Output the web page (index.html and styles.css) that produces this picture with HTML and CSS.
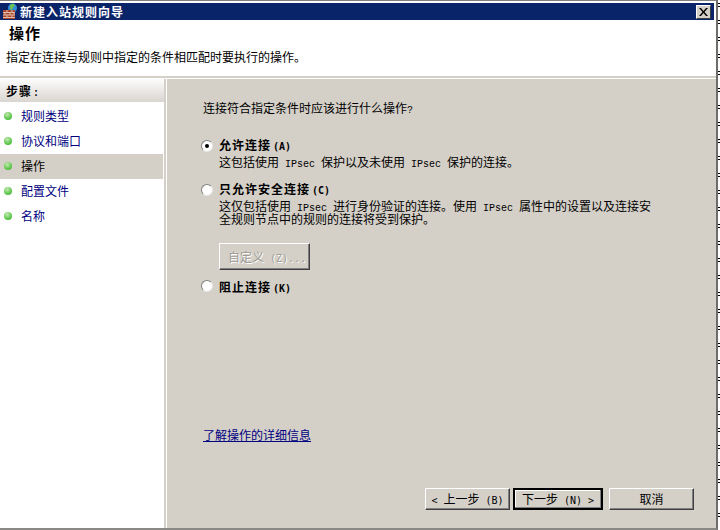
FILE: index.html
```html
<!DOCTYPE html>
<html lang="zh">
<head>
<meta charset="utf-8">
<title>新建入站规则向导</title>
<link rel="stylesheet" href="styles.css">
</head>
<body>
<div class="window">
  <div class="titlebar">
    <svg class="app-icon" width="16" height="16" viewBox="0 0 16 16"><circle cx="9.500" cy="5" r="4.500" fill="#2f8fd8"/><path d="M7 2l3-1.500 2 2-2 2-1 2.500-2-1z" fill="#6cc24f"/><rect x="0" y="7" width="12" height="9" fill="#a5482f"/><path d="M0 9.500h12M0 12h12M0 14.500h12M4 7v2.500M9 7v2.500M2 9.500V12M7 9.500V12M11 9.500V12M4 12v2.500M9 12v2.500" stroke="#e2b9a4" stroke-width="1"/></svg>
    <span class="title-text">新建入站规则向导</span>
    <span class="close-btn"><svg width="9" height="8" viewBox="0 0 9 8"><path d="M0 0h2l2.500 3L7 0h2L5.500 4 9 8H7L4.500 5 2 8H0l3.500-4z" fill="#000"/></svg></span>
  </div>
  <header class="header">
    <h1 class="heading">操作</h1>
    <p class="subheading">指定在连接与规则中指定的条件相匹配时要执行的操作。</p>
  </header>
  <div class="body">
    <nav class="sidebar">
      <div class="steps-title">步骤<span class="lat">:</span></div>
      <ul class="steps">
        <li class="step"><i class="dot"></i><span class="step-link">规则类型</span></li>
        <li class="step"><i class="dot"></i><span class="step-link">协议和端口</span></li>
        <li class="step step-active"><i class="dot"></i><span>操作</span></li>
        <li class="step"><i class="dot"></i><span class="step-link">配置文件</span></li>
        <li class="step"><i class="dot"></i><span class="step-link">名称</span></li>
      </ul>
    </nav>
    <main class="content">
      <p class="question">连接符合指定条件时应该进行什么操作<span class="lat">?</span></p>
      <div class="option option-first">
        <i class="radio radio-on"></i>
        <div class="option-text">
          <div class="option-label">允许连接<span class="lat key">(A)</span></div>
          <div class="option-desc">这包括使用<span class="lat"> IPsec </span>保护以及未使用<span class="lat"> IPsec </span>保护的连接。</div>
        </div>
      </div>
      <div class="option option-second">
        <i class="radio"></i>
        <div class="option-text">
          <div class="option-label">只允许安全连接<span class="lat key">(C)</span></div>
          <div class="option-desc-tight">这仅包括使用<span class="lat"> IPsec </span>进行身份验证的连接。使用<span class="lat"> IPsec </span>属性中的设置以及连接安<br>全规则节点中的规则的连接将受到保护。</div>
          <button class="btn btn-disabled" type="button" disabled>自定义<span class="lat"> (Z)...</span></button>
        </div>
      </div>
      <div class="option option-third">
        <i class="radio radio-high"></i>
        <div class="option-text">
          <div class="option-label">阻止连接<span class="lat key">(K)</span></div>
        </div>
      </div>
      <a class="more-link" href="#">了解操作的详细信息</a>
      <div class="actions">
        <button class="btn" type="button"><span class="lat">&lt; </span>上一步<span class="lat"> (B)</span></button>
        <button class="btn btn-default" type="button">下一步<span class="lat"> (N) &gt;</span></button>
        <button class="btn btn-cancel" type="button">取消</button>
      </div>
    </main>
  </div>
</div>
</body>
</html>
```
FILE: styles.css
```css
* { box-sizing: border-box; }
html, body { margin: 0; padding: 0; }
body {
  width: 720px;
  height: 530px;
  overflow: hidden;
  background: repeating-linear-gradient(#fff 0 3px, #000 3px 4px, #fff 4px 6px, #000 6px 7px, #fff 7px 17px);
  font-family: "Noto Sans CJK SC", "Liberation Sans", sans-serif;
  font-size: 12px;
  color: #000;
}
.window {
  width: 718px;
  height: 530px;
  display: flex;
  flex-direction: column;
  border-top: 1px solid #808080;
  border-right: 2px solid #6e6d69;
  border-bottom: 2px solid #8a8985;
  background: #fff;
}
.lat {
  font-family: "Liberation Mono", monospace;
  font-size: 10px;
  line-height: 0;
  letter-spacing: 0;
  white-space: pre;
}
.key, .btn .lat { font-family: "DejaVu Sans Mono", monospace; }
.titlebar {
  height: 17px;
  flex: none;
  margin: 2px 2px 0 0;
  background: #0a246a;
  display: flex;
  align-items: center;
  padding: 0 3px;
  color: #fff;
}
.app-icon { flex: none; margin-top: -1px; }
.title-text { margin-left: 1px; font-weight: 700; font-size: 12px; letter-spacing: 1px; line-height: 16px; }
.close-btn {
  margin-left: auto;
  width: 15px;
  height: 14px;
  background: #d4d0c8;
  border: 1px solid;
  border-color: #fff #404040 #404040 #fff;
  display: flex;
  align-items: center;
  justify-content: center;
}
.header {
  height: 58px;
  flex: none;
  background: #fff;
  border-bottom: 2px solid #d4d0c8;
  padding: 4px 0 0 9px;
}
.heading { margin: 0; font-size: 15px; line-height: 18px; font-weight: 700; letter-spacing: 1px; }
.subheading { margin: 7px 0 0 -3px; font-size: 12px; line-height: 16px; }
.body { flex: 1; min-height: 0; display: flex; padding-top: 1px; }
.sidebar { width: 166px; flex: none; background: #fff; border-right: 2px solid #d4d0c8; }
.steps-title {
  height: 23px;
  padding: 4px 0 0 6px;
  font-weight: 700;
  letter-spacing: 1px;
  line-height: 16px;
  background: linear-gradient(#fdfcfc, #d9d5d0);
}
.steps-title .lat { margin-left: 1px; }
.steps { list-style: none; margin: 2px 0 0; padding: 0; }
.step { height: 25px; display: flex; align-items: center; padding-left: 4px; }
.step-active { background: #d4d0c8; margin-right: 1px; }
.dot {
  width: 8px;
  height: 8px;
  margin-top: -2px;
  border-radius: 50%;
  background: radial-gradient(circle at 40% 30%, #c4e8b4, #5cc84a 60%, #3ea02e);
  flex: none;
}
.step-link { color: #000080; }
.step span { margin: -2px 0 0 9px; line-height: 16px; }
.content {
  flex: 1;
  min-width: 0;
  background: #d4d0c8;
  margin-left: 1px;
  padding: 21px 0 0 34px;
  display: flex;
  flex-direction: column;
}
.question { margin: 0 0 0 2px; line-height: 16px; }
.option { display: flex; align-items: flex-start; }
.option-first { margin-top: 21px; }
.option-second { margin-top: 11px; }
.option-third { margin-top: 9px; }
.radio {
  width: 12px;
  height: 12px;
  flex: none;
  margin-top: 3px;
  border-radius: 50%;
  background: #fff;
  border: 1px solid;
  border-color: #808080 #e8e6e1 #e8e6e1 #808080;
  display: flex;
  align-items: center;
  justify-content: center;
}
.radio-high { margin-top: 1px; }
.radio-on::after {
  content: "";
  width: 4px;
  height: 4px;
  border-radius: 50%;
  background: #000;
}
.option-text { margin-left: 6px; }
.option-label { font-weight: 700; line-height: 16px; letter-spacing: 1px; }
.key { margin-left: 2px; }
.option-desc { line-height: 16px; margin-top: 1px; }
.option-desc-tight { line-height: 13px; margin-top: 2px; white-space: nowrap; }
.btn {
  height: 22px;
  width: 85px;
  padding: 0;
  background: #d4d0c8;
  font: inherit;
  line-height: 16px;
  color: #000;
  border: 1px solid;
  border-color: #fff #404040 #404040 #fff;
  box-shadow: inset -1px -1px 0 #808080;
}
.btn-disabled {
  display: block;
  width: 91px;
  height: 27px;
  margin-top: 18px;
  color: #a09d96;
  text-shadow: 1px 1px 0 #fff;
  text-align: left;
  padding-left: 8px;
}
.more-link {
  align-self: flex-start;
  margin: 132px 0 0 2px;
  color: #000080;
  text-decoration: underline;
  line-height: 16px;
}
.actions { display: flex; gap: 3px; margin: 45px 0 0 224px; }
.btn-default { width: 90px; border: 2px solid #000; box-shadow: inset -1px -1px 0 #808080, inset 1px 1px 0 #fff; }
.btn-cancel { margin-left: 3px; }
```
